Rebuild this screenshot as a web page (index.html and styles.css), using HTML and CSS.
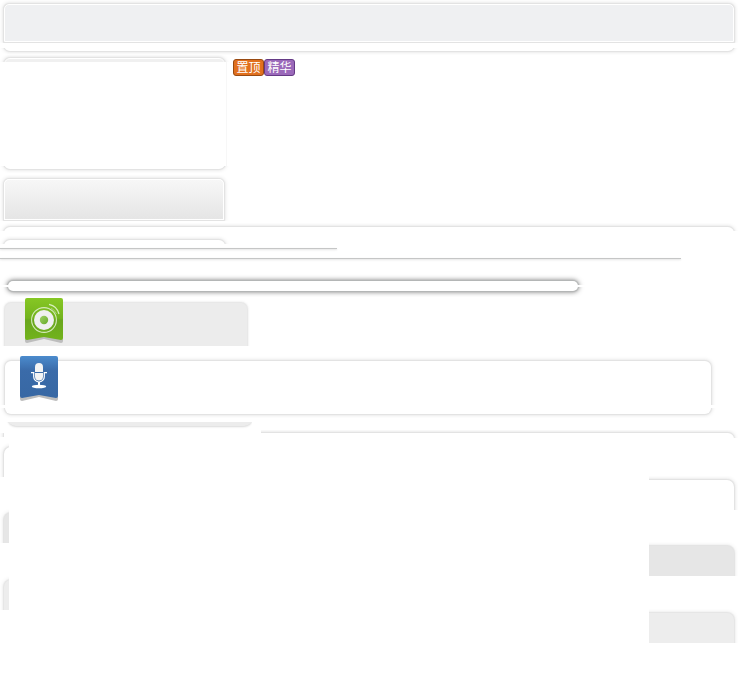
FILE: index.html
```
<!DOCTYPE html>
<html lang="zh-CN">
<head>
<meta charset="utf-8">
<title>Panels</title>
<link rel="stylesheet" href="styles.css">
</head>
<body>
<header>
  <div class="slice head-top"><div class="box"></div></div>
  <div class="slice head-end"><div class="box"></div></div>
</header>
<section class="intro">
  <div class="side">
    <div class="slice side-top"><div class="box"></div></div>
    <div class="side-mid"></div>
    <div class="slice side-end"><div class="box"></div></div>
    <div class="slice side-title"><div class="box"></div></div>
  </div>
  <div class="badges"><span class="badge top">置顶</span><span class="badge best">精华</span></div>
</section>
<div class="slice wide-cap"><div class="box"></div></div>
<div class="slice side-cap"><div class="box"></div></div>
<div class="rule short"></div>
<div class="rule long"></div>
<div class="pill">
  <div class="slice pill-top"><div class="box"></div></div>
  <div class="slice pill-end"><div class="box"></div></div>
</div>
<section class="album">
  <div class="slice album-top"><div class="box"></div></div>
  <svg class="ribbon green" width="38" height="46" viewBox="0 0 38 46">
    <defs>
      <linearGradient id="g" x2="0" y2="1"><stop stop-color="#86c724"/><stop offset=".48" stop-color="#73b31d"/><stop offset=".52" stop-color="#69a61d"/><stop offset="1" stop-color="#72b31c"/></linearGradient>
      <linearGradient id="d" x2="1" y2="1"><stop stop-color="#a1d169"/><stop offset="1" stop-color="#66ab27"/></linearGradient>
    </defs>
    <path d="M0 39h38v4q0 2-2 2L19 41 2 45q-2 0-2-2z" fill="#bdbdbd"/>
    <path d="M2 0h34q2 0 2 2v38q0 2-2 2L19 39 2 42q-2 0-2-2V2q0-2 2-2z" fill="url(#g)"/>
    <circle cx="19" cy="22" r="12.4" fill="none" stroke="#d5eabb" stroke-width="1.1"/>
    <circle cx="19" cy="22" r="10" fill="#f0f0f0"/>
    <circle cx="19" cy="22" r="4.2" fill="url(#d)"/>
    <path d="M24 6.300Q32 8 34 16" fill="none" stroke="#d9efbd" stroke-width="1.300"/>
    <path d="M26 10q4 2 5.500 6" fill="none" stroke="#a9d574" stroke-width="1"/>
  </svg>
</section>
<section class="voice">
  <div class="slice voice-top"><div class="box"></div></div>
  <div class="slice voice-end"><div class="box"></div></div>
  <svg class="ribbon blue" width="38" height="46" viewBox="0 0 38 46">
    <defs><linearGradient id="b" x2="0" y2="1"><stop stop-color="#4b8bcd"/><stop offset=".35" stop-color="#3a6ba9"/><stop offset="1" stop-color="#3868a4"/></linearGradient></defs>
    <path d="M0 39h38v4q0 2-2 2L19 41 2 45q-2 0-2-2z" fill="#bdbdbd"/>
    <path d="M2 0h34q2 0 2 2v38q0 2-2 2L19 39 2 42q-2 0-2-2V2q0-2 2-2z" fill="url(#b)"/>
    <path d="M15 16v-5a4 4 0 0 1 8 0v5zM15 17h8v3.500a4 4 0 0 1-8 0z" fill="#f4f4f4"/>
    <path d="M11 16.700h2.700v4a5.300 5.300 0 0 0 10.600 0v-4H27" fill="none" stroke="#fff" stroke-width="1.200"/>
    <path d="M18 26h2v3h-2z" fill="#fff"/><ellipse cx="19" cy="30.500" rx="7.200" ry="1.700" fill="#fff"/>
  </svg>
</section>
<div class="slice album-end"><div class="box"></div></div>
<div class="cap-row"><div class="slice stub"><div class="box"></div></div><div class="slice cap-end"><div class="box"></div></div></div>
<section class="tabs">
  <div class="tab-col left">
    <div class="slice tab white"><div class="box"></div></div>
    <div class="slice tab dark"><div class="box"></div></div>
    <div class="slice tab gray"><div class="box"></div></div>
  </div>
  <div class="tab-col right">
    <div class="slice tab white"><div class="box"></div></div>
    <div class="slice tab dark"><div class="box"></div></div>
    <div class="slice tab gray"><div class="box"></div></div>
  </div>
</section>
</body>
</html>
```
FILE: styles.css
```
* { box-sizing: border-box; }
body { margin: 0; width: 738px; height: 700px; background: #fff; overflow: hidden; font-family: "Noto Sans", "Noto Sans CJK SC", sans-serif; }
svg { display: block; }
.slice { display: flow-root; overflow: hidden; }
.box { background: #fff; border-radius: 6px; box-shadow: 0 0 1px 1px #e2e2e2, 0 0 4px 1px rgba(0, 0, 0, .12); }

.head-top { height: 43px; }
.head-top .box { height: 38px; margin: 4px 4px 0; border: 1px solid #fff; border-radius: 5px 5px 0 0; background: #eff0f2; }
.head-end { height: 7px; margin-top: 5px; }
.head-end .box { height: 30px; margin: -27px 4px 0; }

.intro { display: flex; height: 166px; }
.side { width: 229px; }
.side-top { height: 7px; }
.side-top .box { height: 40px; margin: 3px 4px 0; border: 1px solid #fff; background: #f0f0f0; }
.side-mid { width: 227px; height: 104px; border-right: 1px solid #f7f7f7; }
.side-end { height: 7px; }
.side-end .box { height: 30px; margin: -27px 4px 0; }
.side-title { height: 46px; margin-top: 2px; }
.side-title .box { width: 220px; height: 41px; margin: 4px 0 0 4px; border: 1px solid #fff; border-radius: 5px 5px 0 0; background: linear-gradient(#f7f7f7, #e5e5e5); }
.badges { display: flex; height: 17px; margin: 4px 0 0 4px; }
.badge { width: 31px; height: 17px; border: 1px solid; border-radius: 3px; color: #fff; font-size: 12px; line-height: 15px; text-align: center; white-space: nowrap; }
.badge.top { background: #e1701e; border-color: #984a12; }
.badge.best { background: #9b69ba; border-color: #653a85; }

.wide-cap { height: 8px; margin-top: 2px; }
.wide-cap .box { height: 30px; margin: 4px 4px 0; }
.side-cap { height: 8px; margin-top: 5px; }
.side-cap .box { width: 221px; height: 30px; margin: 4px 0 0 4px; }
.rule { height: 1px; background: #c5c6c6; box-shadow: 0 1px 2px rgba(0, 0, 0, .15); }
.rule.short { width: 337px; margin-top: 4px; }
.rule.long { width: 681px; margin-top: 9px; }

.pill { margin-top: 15px; }
.pill-top { height: 11px; }
.pill .box { width: 570px; height: 10px; margin: 7px 0 0 8px; box-shadow: 0 0 1px 1px #b4b6b6, 0 0 5px 1px rgba(0, 0, 0, .5); }
.pill-end { height: 10px; margin-top: 2px; }
.pill-end .box { margin-top: -6px; }

.album { position: relative; height: 49px; }
.album-top { height: 49px; padding-top: 1px; }
.album-top .box { width: 242px; height: 80px; margin: 5px 0 0 5px; background: #ececec; box-shadow: 0 0 1px 1px #e7e7e7, 0 0 3px 1px rgba(0, 0, 0, .08); }
.ribbon { position: absolute; }
.ribbon.green { left: 25px; top: 1px; }
.ribbon.blue { left: 20px; top: 0; }

.voice { position: relative; margin-top: 10px; }
.voice-top { height: 49px; }
.voice-top .box { width: 706px; height: 90px; margin: 5px 0 0 5px; }
.voice-end { height: 10px; margin-top: 3px; }
.voice-end .box { width: 706px; height: 40px; margin: -34px 0 0 5px; }
.album-end { width: 252px; height: 8px; margin-top: 4px; padding-left: 7px; }
.album-end .box { width: 246px; height: 30px; margin: -26px 0 0; border-radius: 9px; background: #ececec; box-shadow: 0 1px 2px rgba(0, 0, 0, .15); }

.cap-row { display: flex; justify-content: space-between; height: 8px; }
.stub { width: 4px; height: 4px; margin-top: 3px; }
.stub .box { width: 40px; height: 20px; margin: -5px 0 0 4px; }
.cap-end { width: 477px; }
.cap-end .box { height: 30px; margin: 3px 4px 0 -10px; }

.tabs { display: flex; justify-content: space-between; }
.tab-col { padding-top: 5px; width: 9px; }
.tab-col.right { padding-top: 38px; width: 89px; }
.tab { height: 34px; margin-bottom: 32px; }
.tab.dark { margin-bottom: 33px; }
.tab .box { width: 80px; height: 60px; margin: 4px 0 0 4px; border-radius: 7px; }
.right .tab .box { width: 105px; margin-left: -20px; }
.tab.dark .box { background: #e6e6e6; box-shadow: 0 0 1px 1px #e3e3e3, 0 0 4px 1px rgba(0, 0, 0, .09); }
.tab.gray .box { background: #ededed; box-shadow: 0 0 1px 1px #e5e5e5, 0 0 4px 1px rgba(0, 0, 0, .09); }
```
